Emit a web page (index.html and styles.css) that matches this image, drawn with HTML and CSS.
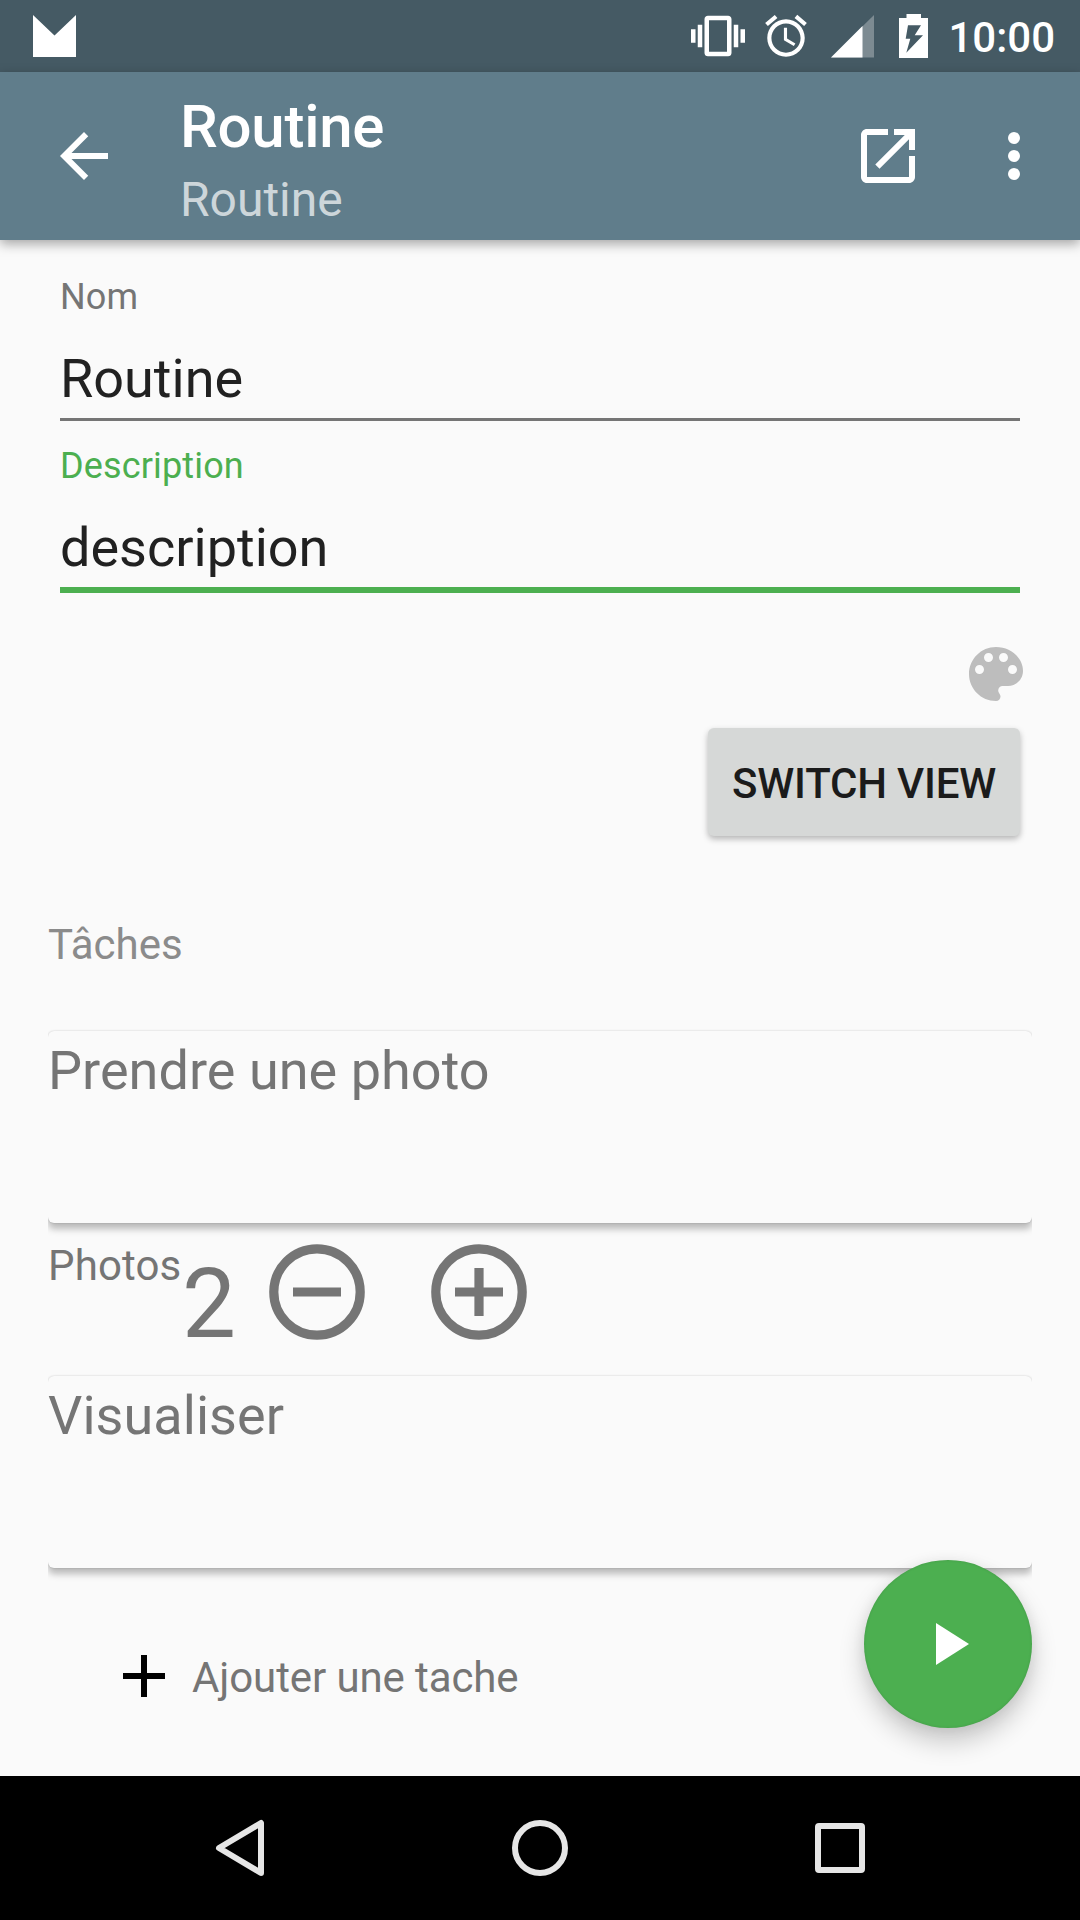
FILE: index.html
```html
<!DOCTYPE html>
<html lang="fr">
<head>
<meta charset="utf-8">
<title>Routine</title>
<link rel="stylesheet" href="styles.css">
</head>
<body>
<div class="screen">
  <header class="status-bar">
    <svg class="notif" viewBox="0 0 43 42"><path d="M0 0L21.5 20.5L43 0V42H0z"/></svg>
    <div class="status-icons">
      <svg class="vibrate" viewBox="0 0 24 24"><path d="M0 15h2V9H0v6zm3 2h2V7H3v10zm19-8v6h2V9h-2zm-3 8h2V7h-2v10zM16.5 3h-9C6.67 3 6 3.67 6 4.5v15c0 .83.67 1.5 1.5 1.5h9c.83 0 1.5-.67 1.5-1.5v-15c0-.83-.67-1.5-1.5-1.5zM16 19H8V5h8v14z"/></svg>
      <svg class="alarm" viewBox="0 0 24 24"><path d="M22 5.72l-4.6-3.86-1.29 1.53 4.6 3.86L22 5.72zM7.88 3.39L6.6 1.86 2 5.71l1.29 1.53 4.59-3.85zM12.5 8H11v6l4.75 2.85.75-1.23-4-2.37V8zM12 4c-4.97 0-9 4.03-9 9s4.02 9 9 9c4.97 0 9-4.03 9-9s-4.03-9-9-9zm0 16c-3.87 0-7-3.13-7-7s3.13-7 7-7 7 3.13 7 7-3.13 7-7 7z"/></svg>
      <svg class="signal" viewBox="0 0 43 43"><path opacity=".3" d="M0 42.5L43 0V42.5z"/><path d="M0 42.5L31.5 11V42.5z"/></svg>
      <svg class="battery" viewBox="0 0 29 44"><path fill-rule="evenodd" d="M7.5 0H22V4H29V44H0V4H7.5zM9 11.3L6.7 24.7H11.3L7.3 38.7L24 21.3H15.7L22 11.3z"/></svg>
      <span class="clock">10:00</span>
    </div>
  </header>

  <div class="app-bar">
    <svg class="icon" viewBox="0 0 24 24"><path d="M20 11H7.83l5.59-5.59L12 4l-8 8 8 8 1.41-1.41L7.83 13H20v-2z"/></svg>
    <div class="titles">
      <h1 class="title">Routine</h1>
      <p class="subtitle">Routine</p>
    </div>
    <svg class="icon" viewBox="0 0 24 24"><path d="M19 19H5V5h7V3H5c-1.11 0-2 .9-2 2v14c0 1.1.89 2 2 2h14c1.1 0 2-.9 2-2v-7h-2v7zM14 3v2h3.59l-9.83 9.83 1.41 1.41L19 6.41V10h2V3h-7z"/></svg>
    <svg class="icon more" viewBox="0 0 24 24"><circle cx="12" cy="6" r="2"/><circle cx="12" cy="12" r="2"/><circle cx="12" cy="18" r="2"/></svg>
  </div>

  <main class="content">
    <section class="form">
      <div class="field">
        <span class="label">Nom</span>
        <span class="value">Routine</span>
      </div>
      <div class="field focused">
        <span class="label">Description</span>
        <span class="value">description</span>
      </div>
    </section>

    <div class="tools">
      <svg class="palette" viewBox="0 0 24 24"><path d="M12 3c-4.97 0-9 4.03-9 9s4.03 9 9 9c.83 0 1.5-.67 1.5-1.5 0-.39-.15-.74-.39-1.01-.23-.26-.38-.61-.38-.99 0-.83.67-1.5 1.5-1.5H16c2.76 0 5-2.24 5-5 0-4.42-4.03-8-9-8zm-5.5 9c-.83 0-1.5-.67-1.5-1.5S5.67 9 6.5 9 8 9.67 8 10.5 7.33 12 6.5 12zm3-4C8.67 8 8 7.33 8 6.5S8.67 5 9.5 5s1.5.67 1.5 1.5S10.33 8 9.5 8zm5 0c-.83 0-1.5-.67-1.5-1.5S13.67 5 14.5 5s1.5.67 1.5 1.5S15.33 8 14.5 8zm3 4c-.83 0-1.5-.67-1.5-1.5S16.67 9 17.5 9s1.5.67 1.5 1.5-.67 1.5-1.5 1.5z"/></svg>
      <button class="switch">SWITCH VIEW</button>
    </div>

    <section class="tasks">
      <h2 class="heading">Tâches</h2>
      <article class="card">Prendre une photo</article>
      <div class="counter">
        <span class="counter-label">Photos</span>
        <span class="count">2</span>
        <svg class="round minus" viewBox="0 0 96 96"><circle cx="48" cy="48" r="43.2"/><path d="M24 48H72"/></svg>
        <svg class="round" viewBox="0 0 96 96"><circle cx="48" cy="48" r="43.2"/><path d="M24 48H72M48 24V72"/></svg>
      </div>
      <article class="card">Visualiser</article>
    </section>

    <div class="add">
      <svg class="plus" viewBox="0 0 42 42"><path d="M18 0h6v18h18v6H24v18h-6V24H0v-6h18z"/></svg>
      <span class="add-label">Ajouter une tache</span>
    </div>
  </main>

  <button class="fab" aria-label="Démarrer"><svg class="play" viewBox="0 0 33 42"><path d="M0 0L33 21L0 42z"/></svg></button>

  <nav class="nav-bar">
    <svg class="nav-icon" viewBox="0 0 60 60"><path d="M51 5V55L9 30z"/></svg>
    <svg class="nav-icon" viewBox="0 0 60 60"><circle cx="30" cy="30" r="25"/></svg>
    <svg class="nav-icon" viewBox="0 0 60 60"><rect x="8" y="8" width="44" height="44" rx="1"/></svg>
  </nav>
</div>
</body>
</html>
```
FILE: styles.css
```css
* { box-sizing: border-box; }
body, h1, h2, p { margin: 0; }
body {
  font-family: Roboto, "Liberation Sans", sans-serif;
  font-weight: 400;
  background: #fafafa;
}
svg { display: block; flex: none; fill: #fff; }
button { border: 0; font-family: inherit; }

.screen {
  position: relative;
  display: flex;
  flex-direction: column;
  width: 1080px;
  height: 1920px;
  overflow: hidden;
  background: #fafafa;
}

.status-bar {
  display: flex;
  justify-content: space-between;
  align-items: center;
  height: 72px;
  padding: 0 25px 0 32.5px;
  background: #455a64;
}
.notif { width: 43px; height: 42px; }
.status-icons { display: flex; align-items: center; height: 72px; }
.vibrate { width: 54px; height: 54px; }
.alarm { width: 50px; height: 50px; margin: 0 20px 0 16px; }
.signal { width: 43px; height: 43px; }
.battery { width: 29px; height: 44px; margin: 0 20px 0 25px; }
.clock { padding-top: 4px; color: #fff; font-size: 42px; font-weight: 500; line-height: 68px; }

.app-bar {
  position: relative;
  z-index: 1;
  display: flex;
  align-items: center;
  height: 168px;
  padding: 0 30px 0 48px;
  background: #607d8b;
  box-shadow: 0 4px 11px rgba(0, 0, 0, .34);
}
.icon { width: 72px; height: 72px; }
.more { margin-left: 54px; }
.titles { flex: 1; padding: 8px 0 0 60px; }
.title { color: #fff; font-size: 60px; font-weight: 500; line-height: 76px; letter-spacing: -.25px; }
.subtitle { padding-top: 4px; color: rgba(255, 255, 255, .7); font-size: 48px; line-height: 62px; }

.content { flex: 1; display: flex; flex-direction: column; }
.form { padding: 34px 60px 0; }
.field {
  display: flex;
  flex-direction: column;
  height: 169px;
}
.label { color: #757575; font-size: 36px; line-height: 46px; letter-spacing: .15px; }
.value {
  flex: none;
  padding-top: 27px;
  height: 101px;
  border-bottom: 3px solid #757575;
  color: #212121;
  font-size: 54px;
  line-height: 64px;
}
.focused .label { color: #4caf50; }
.focused .value { height: 104px; border-bottom: 6px solid #4caf50; }

.tools {
  display: flex;
  flex-direction: column;
  align-items: flex-end;
  gap: 18px;
  padding: 26px 60px 0;
}
.palette { width: 72px; height: 72px; margin-right: -12px; fill: #bdbdbd; }
.switch {
  width: 312px;
  height: 108px;
  padding: 2px 0 0;
  border-radius: 6px;
  background: #d6d8d7;
  color: #1b1b1b;
  font-size: 42px;
  font-weight: 500;
  letter-spacing: -.2px;
  white-space: nowrap;
  box-shadow: 0 3px 6px rgba(0, 0, 0, .28);
}

.tasks { padding: 84px 48px 0; }
.heading { color: #8b8b8b; font-size: 42px; font-weight: 400; line-height: 50px; margin-bottom: 61px; }
.card {
  height: 192px;
  padding-top: 8px;
  border-radius: 6px;
  color: #757575;
  font-size: 54px;
  line-height: 64px;
  letter-spacing: .04px;
  background: #fafafa;
  box-shadow: 0 6px 7px rgba(0, 0, 0, .26), 0 0 2px rgba(0, 0, 0, .2);
  clip-path: inset(-10px 0 -24px);
}
.counter { display: flex; align-items: flex-start; height: 153px; color: #757575; }
.counter-label { width: 134px; padding-top: 18px; font-size: 42px; line-height: 50px; letter-spacing: .15px; }
.count { width: 53px; padding-top: 25px; font-size: 96px; line-height: 112px; }
.round {
  width: 96px;
  height: 96px;
  margin: 21px 0 0 66px;
  fill: none;
  stroke: #757575;
  stroke-width: 9.2;
}
.minus { margin-left: 34px; }

.add {
  display: flex;
  align-items: center;
  gap: 27px;
  padding: 81px 0 0 123px;
  color: #757575;
  font-size: 42px;
  line-height: 50px;
}
.add-label { padding-top: 4px; letter-spacing: -.1px; }
.plus { width: 42px; height: 42px; fill: #000; }

.fab {
  position: absolute;
  left: 864px;
  top: 1560px;
  display: grid;
  place-items: center;
  width: 168px;
  height: 168px;
  padding: 0 0 0 9px;
  border-radius: 50%;
  background: #4caf50;
  box-shadow: 0 14px 26px rgba(0, 0, 0, .2), 0 2px 14px rgba(0, 0, 0, .07), inset 0 0 3px rgba(0, 0, 0, .12);
}
.play { width: 33px; height: 42px; }

.nav-bar {
  position: relative;
  z-index: 1;
  display: flex;
  justify-content: center;
  align-items: center;
  gap: 240px;
  height: 144px;
  background: #000;
}
.nav-icon {
  width: 60px;
  height: 60px;
  fill: none;
  stroke: #e6e6e6;
  stroke-width: 6;
  stroke-linejoin: round;
}
```
